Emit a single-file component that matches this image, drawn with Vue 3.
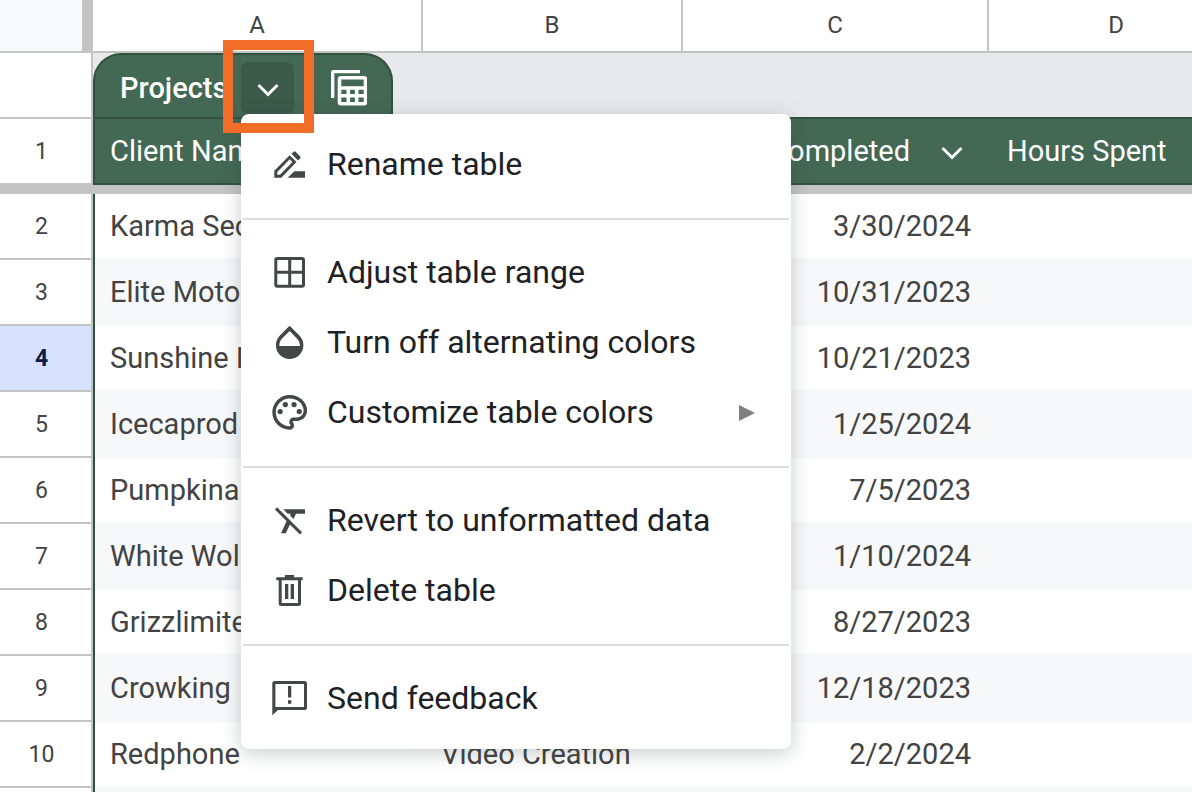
<script setup>
const columns = ['A', 'B', 'C', 'D']

const rows = [
  { n: 2, name: 'Karma Sec', service: '', date: '3/30/2024' },
  { n: 3, name: 'Elite Moto', service: '', date: '10/31/2023' },
  { n: 4, name: 'Sunshine I', service: '', date: '10/21/2023', active: true },
  { n: 5, name: 'Icecaprod', service: '', date: '1/25/2024' },
  { n: 6, name: 'Pumpkina', service: '', date: '7/5/2023' },
  { n: 7, name: 'White Wol', service: '', date: '1/10/2024' },
  { n: 8, name: 'Grizzlimite', service: '', date: '8/27/2023' },
  { n: 9, name: 'Crowking', service: '', date: '12/18/2023' },
  { n: 10, name: 'Redphone', service: 'Video Creation', date: '2/2/2024' },
  { n: '', name: '', service: '', date: '' },
]

const groups = [
  [{ id: 'rename', label: 'Rename table' }],
  [
    { id: 'range', label: 'Adjust table range' },
    { id: 'drop', label: 'Turn off alternating colors' },
    { id: 'palette', label: 'Customize table colors', submenu: true },
  ],
  [
    { id: 'clear', label: 'Revert to unformatted data' },
    { id: 'trash', label: 'Delete table' },
  ],
  [{ id: 'feedback', label: 'Send feedback' }],
]
</script>

<template>
  <main class="sheet">
    <table class="grid">
      <colgroup>
        <col class="col-num" />
        <col class="col-a" />
        <col class="col-b" />
        <col class="col-c" />
        <col class="col-d" />
      </colgroup>
      <thead>
        <tr class="letters">
          <td class="corner"></td>
          <th v-for="c in columns" :key="c" scope="col">{{ c }}</th>
        </tr>
      </thead>
      <tbody>
        <tr class="tab-row">
          <td class="num"></td>
          <td colspan="4" class="tab-cell">
            <div class="tab">
              <span class="tab-name">Projects</span>
              <div class="menu-anchor">
                <button class="tab-toggle" type="button" aria-label="Table menu" aria-haspopup="menu" aria-expanded="true">
                  <svg width="24" height="24" viewBox="0 0 24 24"><path d="M2.500 9 12 18.500l9.500-9.500" fill="none" stroke="#fff" stroke-width="3" /></svg>
                </button>
                <div class="menu" role="menu">
                  <div v-for="(group, g) in groups" :key="g" class="group">
                    <button v-for="item in group" :key="item.id" class="item" type="button" role="menuitem">
                      <svg class="icon" viewBox="0 0 42 42">
                        <template v-if="item.id === 'rename'">
                          <path fill-rule="evenodd" d="M5.300 33.700V26.700L20.700 11.300 27.500 18 12.300 33.700ZM8.300 30.700H11L23.400 18 20.700 15.300 8.300 27.900Z" />
                          <path d="M22.500 9.800 24.800 7.700Q25.700 7 26.500 7.700L31.300 12.600Q32 13.500 31.300 14.300L29 16.500ZM18.500 33.700 25.500 27.300H36V33.700Z" />
                        </template>
                        <template v-else-if="item.id === 'range'">
                          <rect x="6.800" y="6.500" width="27.700" height="27.700" rx="1.500" class="line" />
                          <path d="M20.700 6v28M6 20.300h29" class="line" />
                        </template>
                        <path v-else-if="item.id === 'drop'" transform="scale(1.72) translate(0 -.1)" d="M17.660 8L12 2.350 6.340 8C4.780 9.560 4 11.640 4 13.640s.78 4.110 2.340 5.670 3.610 2.350 5.660 2.350 4.100-.79 5.660-2.350S20 15.640 20 13.640 19.220 9.560 17.660 8zM6 14c.01-2 .62-3.270 1.760-4.400L12 5.270l4.240 4.380C17.380 10.770 17.990 12 18 14H6z" />
                        <g v-else-if="item.id === 'palette'" transform="scale(1.74) translate(-.1 -.3)">
                          <path d="M12 22C6.490 22 2 17.510 2 12S6.490 2 12 2s10 4.040 10 9c0 3.310-2.690 6-6 6h-1.770c-.28 0-.5.22-.5.5 0 .12.05.23.13.33.41.47.64 1.060.64 1.670 0 1.380-1.120 2.500-2.500 2.500zm0-18c-4.410 0-8 3.590-8 8s3.590 8 8 8c.28 0 .5-.22.5-.5 0-.16-.08-.28-.14-.35-.41-.46-.63-1.050-.63-1.650 0-1.380 1.120-2.500 2.500-2.500H16c2.210 0 4-1.790 4-4 0-3.860-3.590-7-8-7z" />
                          <circle cx="6.500" cy="11.500" r="1.500" /><circle cx="9.500" cy="7.500" r="1.500" />
                          <circle cx="14.500" cy="7.500" r="1.500" /><circle cx="17.500" cy="11.500" r="1.500" />
                        </g>
                        <template v-else-if="item.id === 'clear'">
                          <path d="M14.300 9.300H36V13.700H27L24.500 19 21 15.500 21.700 13.700H18.700ZM18 20.300 12 33.300H16.700L21.300 23.700Z" />
                          <path d="M7 8.400 32 33.400" class="line" />
                        </template>
                        <template v-else-if="item.id === 'trash'">
                          <path d="M7.300 7.300H16V5H25V7.300H33.700V10.300H7.300ZM16 14H19.300V29H16ZM21.700 14H25V29H21.700Z" />
                          <path d="M11.200 9V33.500Q11.200 34.500 12.200 34.500H29.500Q30.500 34.500 30.500 33.500V9" class="line" />
                        </template>
                        <template v-else>
                          <path fill-rule="evenodd" d="M5.800 3H35.500Q38 3 38 5.500V29.500Q38 32 35.500 32H9L3.300 37.300V5.500Q3.300 3 5.800 3ZM6.400 6V29H35V6Z" />
                          <path d="M19 8H22.300V19.500H19ZM19 22.300H22.300V25.700H19Z" />
                        </template>
                      </svg>
                      <span class="label">{{ item.label }}</span>
                      <svg v-if="item.submenu" class="sub" width="16" height="16" viewBox="0 0 16 16"><path d="M0 0 16 8 0 16Z" fill="#808080" /></svg>
                    </button>
                  </div>
                </div>
                <div class="callout"></div>
              </div>
              <button class="tab-view" type="button" aria-label="Table views">
                <svg width="36" height="36" viewBox="0 0 36 36" fill="none" stroke="#fff" stroke-width="3.300">
                  <path d="M1.700 28V2.500Q1.700 1.700 2.500 1.700H29" />
                  <rect x="8.500" y="7.800" width="26" height="26" rx="1.500" stroke-width="3.600" />
                  <path d="M8 18H35M8 25.800H35M17.300 18V34M25.700 18V34" stroke-width="3.600" />
                </svg>
              </button>
            </div>
          </td>
        </tr>
        <tr class="fields">
          <th class="num" scope="row">1</th>
          <th scope="col" class="first">Client Nam</th>
          <th scope="col"></th>
          <th scope="col">
            <div class="field right">
              <span>Completed</span>
              <button class="field-toggle" type="button" aria-label="Column menu">
                <svg width="24" height="24" viewBox="0 0 24 24"><path d="M2.500 9 12 18.500l9.500-9.500" fill="none" stroke="#fff" stroke-width="3" /></svg>
              </button>
            </div>
          </th>
          <th scope="col">Hours Spent</th>
        </tr>
        <tr class="freeze"><td colspan="5"></td></tr>
        <tr v-for="(r, i) in rows" :key="i" class="data" :class="{ striped: i % 2 === 1 }">
          <th class="num" :class="{ active: r.active }" scope="row">{{ r.n }}</th>
          <td class="first">{{ r.name }}</td>
          <td>{{ r.service }}</td>
          <td class="date">{{ r.date }}</td>
          <td></td>
        </tr>
      </tbody>
    </table>
  </main>
</template>

<style>
body {
  margin: 0;
  background: #fff;
}
</style>

<style scoped>
.sheet {
  height: 100vh;
  overflow: hidden;
  font-family: Roboto, "Liberation Sans", sans-serif;
  color: #434343;
}
button {
  border: 0;
  padding: 0;
  background: none;
  font: inherit;
  color: inherit;
}
svg {
  display: block;
  flex: none;
}
.grid {
  width: 1245px;
  table-layout: fixed;
  border-collapse: separate;
  border-spacing: 0;
}
.col-num { width: 93px; }
.col-a { width: 330px; }
.col-b { width: 260px; }
.col-c { width: 306px; }
.grid th,
.grid td {
  box-sizing: border-box;
  height: 66px;
  padding: 0 18px;
  font-size: 29px;
  font-weight: 400;
  line-height: 36px;
  text-align: left;
  white-space: nowrap;
}
.grid .letters th,
.grid .corner {
  height: 53px;
  border-bottom: 2px solid #c4c4c4;
}
.grid .letters th {
  padding: 0 0 2px;
  border-right: 2px solid #c4c4c4;
  font-size: 24px;
  line-height: 28px;
  text-align: center;
}
.grid .corner {
  border-right: 11px solid #c4c4c4;
  background: #f8f9fb;
}
.grid .num {
  padding: 2px 8px 0 0;
  border-right: 2px solid #c4c4c4;
  border-bottom: 2px solid #c4c4c4;
  background: #fff;
  font-size: 23px;
  line-height: 28px;
  text-align: center;
}
.grid .num.active {
  background: #d6e1fb;
  color: #0b1b4c;
  font-weight: 700;
}
.grid .tab-cell {
  padding: 0;
  border-bottom: 2px solid #31513f;
  background: #e8e9ed;
}
.tab {
  display: flex;
  align-items: flex-start;
  box-sizing: border-box;
  width: 300px;
  height: 64px;
  padding: 7px 0 0 25px;
  border: 2px solid #31513f;
  border-bottom: 0;
  border-radius: 28px 28px 0 0;
  background: #436854;
  color: #fff;
}
.tab-name {
  width: 121px;
  padding-top: 8px;
  font-size: 29px;
  font-weight: 500;
}
.menu-anchor {
  position: relative;
}
.tab-toggle {
  display: flex;
  align-items: center;
  justify-content: center;
  width: 53px;
  height: 52px;
  border-radius: 8px;
  background: #3b5a4a;
}
.tab-view {
  margin: 8px 0 0 37px;
}
.callout {
  position: absolute;
  z-index: 3;
  top: -22px;
  left: -18px;
  box-sizing: border-box;
  width: 91px;
  height: 93px;
  border: 10px solid #f06e2a;
  pointer-events: none;
}
.menu {
  position: absolute;
  z-index: 2;
  top: 52px;
  left: 0;
  box-sizing: border-box;
  width: 550px;
  padding: 16px 2px 15px;
  border-radius: 8px;
  background: #fff;
  box-shadow: 0 4px 20px rgba(40, 60, 50, 0.25);
  color: #202124;
}
.group + .group {
  margin-top: 18px;
  padding-top: 18px;
  border-top: 2px solid #dadce0;
}
.item {
  display: flex;
  align-items: center;
  width: 100%;
  height: 70px;
  padding: 0 34px 0 26px;
  font-size: 32px;
  line-height: 36px;
  text-align: left;
}
.icon {
  width: 42px;
  height: 42px;
  margin-right: 16px;
  fill: #444746;
}
.icon .line {
  fill: none;
  stroke: #444746;
  stroke-width: 3;
}
.label {
  flex: 1;
  padding-bottom: 2px;
}
.grid .fields th:not(.num) {
  border-bottom: 2px solid #31513f;
  background: #436854;
  color: #fff;
}
.grid .data td {
  padding-bottom: 2px;
}
.grid .first {
  padding-left: 15px;
  border-left: 2px solid #31513f;
}
.field {
  display: flex;
  align-items: center;
  justify-content: flex-end;
  gap: 30px;
  margin-right: 7px;
}
.grid .freeze td {
  height: 9px;
  padding: 0;
  background: #c4c4c4;
  line-height: 0;
}
.striped td {
  background: #f7f8fa;
}
.data:not(.striped) td {
  box-shadow: inset 0 -2px #f7f8fa;
}
.grid .date {
  text-align: right;
}
</style>
